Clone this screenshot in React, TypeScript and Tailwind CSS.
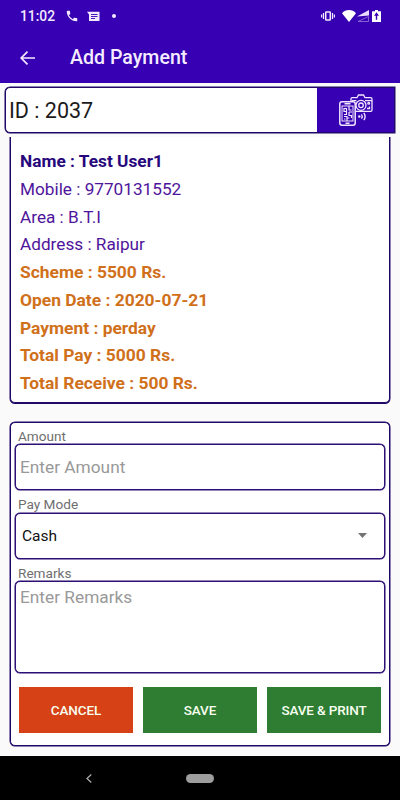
import { useState, type ReactNode } from 'react';

type DetailTone = 'name' | 'contact' | 'scheme';

interface Detail {
  label: string;
  value: string;
  tone: DetailTone;
}

const details: Detail[] = [
  { label: 'Name', value: 'Test User1', tone: 'name' },
  { label: 'Mobile', value: '9770131552', tone: 'contact' },
  { label: 'Area', value: 'B.T.I', tone: 'contact' },
  { label: 'Address', value: 'Raipur', tone: 'contact' },
  { label: 'Scheme', value: '5500 Rs.', tone: 'scheme' },
  { label: 'Open Date', value: '2020-07-21', tone: 'scheme' },
  { label: 'Payment', value: 'perday', tone: 'scheme' },
  { label: 'Total Pay', value: '5000 Rs.', tone: 'scheme' },
  { label: 'Total Receive', value: '500 Rs.', tone: 'scheme' },
];

const toneClass: Record<DetailTone, string> = {
  name: 'text-[17.3px] font-bold text-[#27087c]',
  contact: 'text-[17.2px] text-[#4f149c]',
  scheme: 'text-[17.4px] font-bold text-[#d0701a]',
};

function StatusBar() {
  return (
    <div className="flex h-8 items-center pl-5 pr-[19px] text-[#f3e9ff]">
      <span className="w-[35px] text-[13.8px] font-medium leading-4">11:02</span>
      <svg className="ml-[10px] h-[14px] w-[14px]" viewBox="0 0 24 24" fill="currentColor">
        <path d="M20 15.5c-1.25 0-2.45-.2-3.57-.57-.35-.11-.74-.03-1.02.24l-2.2 2.2a15.05 15.05 0 0 1-6.59-6.58l2.2-2.21c.28-.27.36-.66.25-1.01A11.36 11.36 0 0 1 8.5 4c0-.55-.45-1-1-1H4c-.55 0-1 .45-1 1 0 9.39 7.61 17 17 17 .55 0 1-.45 1-1v-3.5c0-.55-.45-1-1-1z" />
      </svg>
      <svg className="ml-2 h-[11px] w-[13px]" viewBox="0 0 13 11">
        <path d="M0 .8h12.500V10H2V3.500z" fill="currentColor" />
        <path d="M4 3.500h6.500M4 5.500h6.500M4 7.500h4" stroke="#3700b3" strokeWidth="0.900" />
      </svg>
      <span className="ml-[12px] mb-px h-[4px] w-[4px] rounded-full bg-current" />

      <div className="ml-auto flex items-center">
        <svg className="h-[10px] w-[14px]" viewBox="0 0 14 10" fill="none" stroke="currentColor">
          <rect x="4.700" y="1" width="4.600" height="8" rx="0.600" strokeWidth="1.500" />
          <path d="M2.500 2v6M11.500 2v6M.6 3.500v3M13.400 3.500v3" strokeWidth="1.200" />
        </svg>
        <svg className="ml-[7px] h-[12px] w-[14px]" viewBox="0 0 14 12" fill="#fff">
          <path d="M7 12 0 3.200C1.800 1.200 4.200 0 7 0s5.200 1.200 7 3.200z" />
        </svg>
        <svg className="ml-[1px] h-[12px] w-[12px]" viewBox="0 0 12 12">
          <path d="M12 0v5.500L0 6.500z" fill="#e9dcff" />
          <path d="M11.500 6.500v5H1z" fill="none" stroke="#8f6bd8" strokeWidth="0.900" />
        </svg>
        <svg className="ml-[3px] h-[12px] w-[9px]" viewBox="0 0 9 12">
          <path d="M3 0h3v1.200h3V12H0V1.200h3z" fill="#fff" />
          <path d="M4.500 2.200 2 5.800h1.800v4h1.400v-4H7z" fill="#3700b3" />
        </svg>
      </div>
    </div>
  );
}

function ScanIcon() {
  return (
    <svg className="h-8 w-[34px]" viewBox="0 0 34 32" fill="none" stroke="#f1e6ff" strokeWidth="1.300">
      <path d="M12 8V5q0-1.300 1.300-1.300H18L19.500 1h5L26 3.700h5.700Q33 3.700 33 5v11q0 1.300-1.300 1.300H17" />
      <path d="M13 6.700h4.500M26 6.700h7" />
      <circle cx="22" cy="11.300" r="5" />
      <circle cx="22" cy="11.300" r="2.300" />
      <circle cx="29.700" cy="9.300" r="0.900" />
      <path d="M28 14.500h2.500v-2" />
      <rect x="0.800" y="7.800" width="15.400" height="23.400" rx="2.200" fill="#3700b3" strokeWidth="1.500" />
      <path d="M5.500 9.800h6" strokeWidth="1.400" />
      <rect x="3" y="12" width="11" height="15" strokeWidth="1" />
      <path
        d="M5 14.500h2.500v3H5zM10 12v4h2.500M7.500 17.500v3H5M10 18h3M10 18v3.500h2.500V24M5 22.500h3V27M10.500 24h-2.500M5 25h1.500M9.500 14h1"
        strokeWidth="1.200"
      />
      <path d="M6.500 29.200h4" strokeWidth="1.400" />
      <circle cx="20.300" cy="22.500" r="1.200" fill="#f1e6ff" stroke="none" />
      <path d="M22.500 20.300q1.500 2.200 0 4.400M24.800 18.800q2.600 3.700 0 7.400" />
    </svg>
  );
}

function Field({ label, className, children }: { label: string; className: string; children: ReactNode }) {
  return (
    <label className="block">
      <span className="block h-[20.5px] pl-[3px] pt-[2px] text-[13.6px] leading-[20px] text-[#6f6f6f]">{label}</span>
      <span
        className={`flex rounded-[5px] border border-[#2c0f75] bg-white shadow-[0_0_0_0.5px_#2c0f75] ${className}`}
      >
        {children}
      </span>
    </label>
  );
}

function ActionButton({ color, children }: { color: string; children: ReactNode }) {
  return (
    <button
      type="button"
      className={`h-[46px] flex-1 whitespace-nowrap pt-px text-[13.5px] font-medium tracking-[-0.01em] text-[#f8fff0] ${color}`}
    >
      {children}
    </button>
  );
}

export default function App() {
  const [amount, setAmount] = useState('');
  const [remarks, setRemarks] = useState('');

  return (
    <div className="flex h-[800px] w-[400px] flex-col overflow-hidden bg-[#fafafa] font-['Roboto',sans-serif]">
      <header className="h-[83px] bg-[#3700b3]">
        <StatusBar />
        <div className="flex h-[51px] items-center pl-5">
          <svg className="h-[14px] w-[15px]" viewBox="0 0 15 14" fill="none" stroke="#f3e9ff" strokeWidth="1.700">
            <path d="M15 7H1.200M7.500.700 1.200 7l6.300 6.300" />
          </svg>
          <h1 className="ml-[35px] text-[19.6px] font-medium text-[#f5edff]">Add Payment</h1>
        </div>
      </header>

      <div className="mx-[5px] mt-1 flex h-[46px] shrink-0 overflow-hidden rounded-l-[5px] border border-[#1f0866] bg-white shadow-[0_0_0_0.5px_#1f0866]">
        <div className="flex flex-1 items-center pl-[3px] pt-[3px] text-[21.5px] text-[#1b1b1b]">ID : 2037</div>
        <button type="button" aria-label="Scan" className="flex w-[77px] items-center justify-center bg-[#3700b3]">
          <ScanIcon />
        </button>
      </div>

      <section className="mx-[10px] mt-1 h-[266px] shrink-0 rounded-b-[5px] border border-t-0 border-[#1f0866] bg-white pl-[9px] pt-[11px] shadow-[0_0.5px_0_0.5px_#1f0866] [clip-path:inset(0_-2px_-2px_-2px)]">
        {details.map((detail) => (
          <p key={detail.label} className={`h-[27.75px] leading-[27.75px] ${toneClass[detail.tone]}`}>
            {detail.label} : {detail.value}
          </p>
        ))}
      </section>

      <section className="mx-[10px] mt-[19px] h-[324px] shrink-0 rounded-[5px] border border-[#1f0866] bg-white px-1 shadow-[0_0_0_0.5px_#1f0866]">
        <div className="space-y-[2px] pt-[0.5px]">
          <Field label="Amount" className="h-[46px] items-center px-[4px] pt-[2px]">
            <input
              value={amount}
              onChange={(event) => setAmount(event.target.value)}
              placeholder="Enter Amount"
              className="w-full text-[17.3px] outline-none placeholder:text-[#999999]"
            />
          </Field>
          <Field label="Pay Mode" className="h-[46px] items-center justify-between pl-[6px] pr-[17px]">
            <span className="pt-[2px] text-[15.5px] text-[#111111]">Cash</span>
            <svg className="h-[5px] w-[9px]" viewBox="0 0 9 5" fill="#737373">
              <path d="M0 0h9L4.500 5z" />
            </svg>
          </Field>
          <Field label="Remarks" className="h-[92px] px-[4px] pt-[4px]">
            <textarea
              value={remarks}
              onChange={(event) => setRemarks(event.target.value)}
              placeholder="Enter Remarks"
              className="w-full resize-none text-[17.3px] leading-[22px] outline-none placeholder:text-[#999999]"
            />
          </Field>
        </div>
        <div className="mt-[14px] flex gap-[10px] px-[4px]">
          <ActionButton color="bg-[#d64215]">CANCEL</ActionButton>
          <ActionButton color="bg-[#2e7d32]">SAVE</ActionButton>
          <ActionButton color="bg-[#2e7d32]">SAVE &amp; PRINT</ActionButton>
        </div>
      </section>

      <nav className="mt-auto flex h-[44px] shrink-0 items-center bg-black">
        <svg className="ml-[86px] h-[9px] w-[6px]" viewBox="0 0 6 9" fill="none" stroke="#a8a8a8" strokeWidth="1.300">
          <path d="M5.300.500 1 4.500l4.300 4" />
        </svg>
        <span className="ml-[94px] h-[9px] w-[28px] rounded-full bg-[#9e9e9e]" />
      </nav>
    </div>
  );
}
